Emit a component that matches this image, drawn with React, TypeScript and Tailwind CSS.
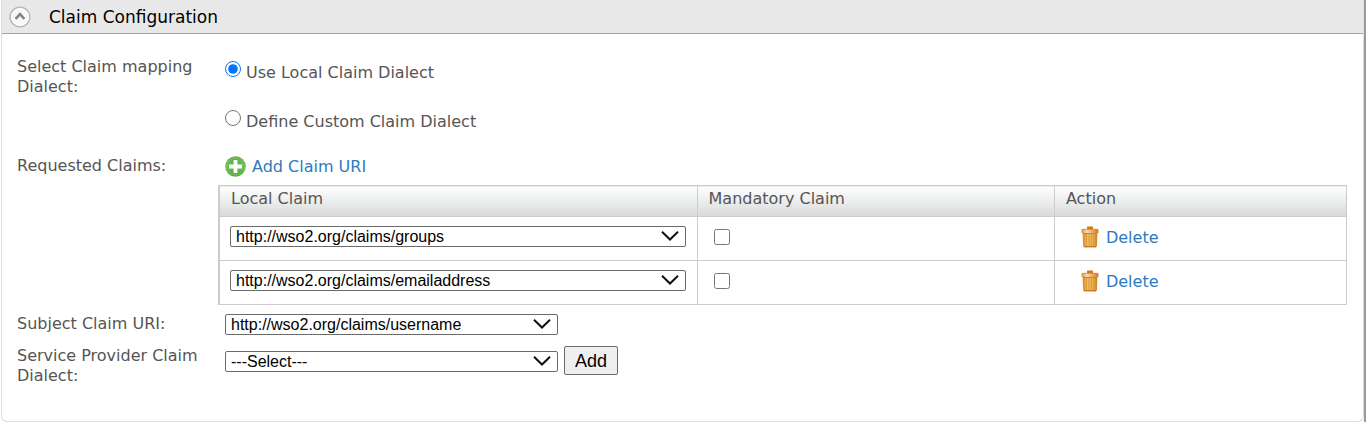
import { useState } from 'react';
import type { ReactNode } from 'react';

const CLAIMS = [
  'http://wso2.org/claims/groups',
  'http://wso2.org/claims/emailaddress',
  'http://wso2.org/claims/username',
];

function CollapseIcon() {
  return (
    <svg width="22" height="22" viewBox="0 0 22 22" aria-hidden="true">
      <circle cx="11" cy="11" r="9.8" fill="#f7f7f7" stroke="#b9b9b9" strokeWidth="1.6" />
      <circle cx="11" cy="11" r="8.4" fill="none" stroke="#ffffff" strokeWidth="1.2" />
      <path d="M6.6 12.8 11 8.200l4.400 4.600" fill="none" stroke="#848484" strokeWidth="2.6" />
    </svg>
  );
}

function AddIcon() {
  return (
    <svg width="21" height="21" viewBox="0 0 21 21" aria-hidden="true">
      <defs>
        <linearGradient id="add-fill" x1="0" y1="0" x2="0" y2="1">
          <stop offset="0" stopColor="#5fae48" />
          <stop offset="0.5" stopColor="#6cbb50" />
          <stop offset="1" stopColor="#55a63f" />
        </linearGradient>
      </defs>
      <circle cx="10.5" cy="10.5" r="10.3" fill="url(#add-fill)" />
      <circle cx="10.5" cy="10.5" r="8.6" fill="none" stroke="#84c86c" strokeWidth="0.8" />
      <path d="M8.6 4h3.8v4.6H17v3.800h-4.600V17H8.600v-4.600H4V8.600h4.600z" fill="#ffffff" />
    </svg>
  );
}

function TrashIcon() {
  return (
    <svg width="18" height="22" viewBox="0 0 18 22" aria-hidden="true">
      <defs>
        <linearGradient id="trash-body" x1="0" y1="0" x2="1" y2="0">
          <stop offset="0" stopColor="#d98228" />
          <stop offset="0.3" stopColor="#f3bd62" />
          <stop offset="0.7" stopColor="#e8b04e" />
          <stop offset="1" stopColor="#d27a26" />
        </linearGradient>
        <linearGradient id="trash-lid" x1="0" y1="0" x2="1" y2="0">
          <stop offset="0" stopColor="#e08a3a" />
          <stop offset="0.3" stopColor="#fbdcae" />
          <stop offset="1" stopColor="#d9781f" />
        </linearGradient>
      </defs>
      <path d="M1.600 7h14.800l-.5 13q-.1 1.400-1.600 1.400H3.700q-1.500 0-1.600-1.400z" fill="url(#trash-body)" />
      <path d="M5.500 8.500v11M8 8.500v11M10.500 8.500v11M13 8.500v11" stroke="#cf9733" strokeWidth="0.8" />
      <path d="M3 20.600h12" stroke="#cf741f" strokeWidth="1.200" />
      <path d="M2 7.600h14" stroke="#cf7524" strokeWidth="0.900" />
      <path d="M6 0.500h6v3H6z" fill="#d5780f" />
      <path d="M1.500 3h15q1 0 1 1v3H.5V4q0-1 1-1z" fill="url(#trash-lid)" />
      <path d="M1.500 3.300h15" stroke="#d9822c" strokeWidth="0.800" />
    </svg>
  );
}

type ClaimSelectProps = {
  id?: string;
  label?: string;
  value: string;
  options: string[];
  className: string;
};

function ClaimSelect({ id, label, value, options, className }: ClaimSelectProps) {
  return (
    <span className={`relative flex ${className}`}>
      <select
        id={id}
        aria-label={label}
        defaultValue={value}
        className="h-[21px] w-full appearance-none rounded-xs border border-[#6b6b6b] bg-white pr-8 pl-[5px] font-['Liberation_Sans',Arial,sans-serif] text-base leading-[18px] text-black"
      >
        {options.map((option) => (
          <option key={option}>{option}</option>
        ))}
      </select>
      <svg
        className="pointer-events-none absolute top-[5px] right-[7px]"
        width="18"
        height="10"
        viewBox="0 0 18 10"
        aria-hidden="true"
      >
        <path d="M1 .8l8 7.700 8-7.700" fill="none" stroke="#111111" strokeWidth="2" />
      </svg>
    </span>
  );
}

function DialectRadio({ label, checked, onSelect }: { label: string; checked: boolean; onSelect: () => void }) {
  return (
    <label className="flex h-5 items-end gap-[5px]">
      <input
        type="radio"
        name="dialect"
        checked={checked}
        onChange={onSelect}
        className="size-4 shrink-0 self-start accent-[#0075ff]"
      />
      <span className="leading-4">{label}</span>
    </label>
  );
}

function HeadCell({ children, className }: { children: ReactNode; className: string }) {
  return (
    <th
      className={`h-[31px] border border-[#cccccc] bg-linear-to-b from-white to-[#d8dada] px-[11px] pb-1 text-left font-normal ${className}`}
    >
      {children}
    </th>
  );
}

export default function App() {
  const [custom, setCustom] = useState(false);
  const [requested, setRequested] = useState([CLAIMS[0], CLAIMS[1]]);

  return (
    <div className="bg-white pr-0.5 pl-px font-['DejaVu_Sans',Verdana,sans-serif] text-base leading-5 text-[#555555] shadow-[inset_-2px_0_0_#999999]">
      <section className="rounded-b-md border border-t-0 border-[#dddddd] bg-white">
        <h2 className="flex h-[34px] items-center border-b border-[#9aa5bd] bg-[#e8e8e8] pl-[7px] text-[17px] text-black">
          <button type="button" aria-label="Collapse" className="mr-[18px]">
            <CollapseIcon />
          </button>
          Claim Configuration
        </h2>

        <div className="grid grid-cols-[208px_1fr] pt-[22px] pr-4 pb-[35px] pl-[15px]">
          <div className="pt-px pr-2">Select Claim mapping Dialect:</div>
          <div className="flex flex-col gap-[29px] pt-[5px]">
            <DialectRadio label="Use Local Claim Dialect" checked={!custom} onSelect={() => setCustom(false)} />
            <DialectRadio label="Define Custom Claim Dialect" checked={custom} onSelect={() => setCustom(true)} />
          </div>

          <div className="pt-[26px]">Requested Claims:</div>
          <div className="flex pt-[25px]">
            <a
              href="#add"
              onClick={() => setRequested([...requested, CLAIMS[2]])}
              className="flex h-[22px] items-center gap-1.5 text-[#2f7abf]"
            >
              <AddIcon />
              <span className="pt-0.5">Add Claim URI</span>
            </a>
          </div>

          <div className="col-start-2 -ml-[7px] pt-2">
            <table className="w-full table-fixed border-collapse border border-l-2 border-[#cccccc]">
              <thead>
                <tr>
                  <HeadCell className="w-[42.4%]">Local Claim</HeadCell>
                  <HeadCell className="w-[31.7%]">Mandatory Claim</HeadCell>
                  <HeadCell className="w-[25.9%]">Action</HeadCell>
                </tr>
              </thead>
              <tbody>
                {requested.map((claim, index) => (
                  <tr key={index} className="h-11">
                    <td className="border border-[#cccccc] pr-[11px] pb-1 pl-2.5">
                      <ClaimSelect label="Local claim" value={claim} options={CLAIMS} className="w-full" />
                    </td>
                    <td className="border border-[#cccccc] px-4 pb-1">
                      <input type="checkbox" aria-label={`Mandatory ${claim}`} className="block size-4" />
                    </td>
                    <td className="border border-[#cccccc] px-[26px] pb-1">
                      <a
                        href="#delete"
                        onClick={() => setRequested(requested.filter((_, i) => i !== index))}
                        className="inline-flex items-center gap-[7px] align-middle text-[#2f7abf]"
                      >
                        <TrashIcon />
                        <span className="pt-0.5">Delete</span>
                      </a>
                    </td>
                  </tr>
                ))}
              </tbody>
            </table>
          </div>

          <label htmlFor="subject-claim" className="pt-[9px]">
            Subject Claim URI:
          </label>
          <div className="pt-[9px]">
            <ClaimSelect id="subject-claim" value={CLAIMS[2]} options={CLAIMS} className="w-[333px]" />
          </div>

          <label htmlFor="sp-dialect" className="pt-[11px]">
            Service Provider Claim Dialect:
          </label>
          <div className="flex items-start gap-1.5 pt-[11px]">
            <ClaimSelect id="sp-dialect" value="---Select---" options={['---Select---']} className="mt-[5px] w-[333px]" />
            <button
              type="button"
              className="h-[29px] rounded-xs border border-[#6b6b6b] bg-[#efefef] px-2.5 font-['Liberation_Sans',Arial,sans-serif] text-lg leading-6 text-black"
            >
              Add
            </button>
          </div>
        </div>
      </section>
    </div>
  );
}
